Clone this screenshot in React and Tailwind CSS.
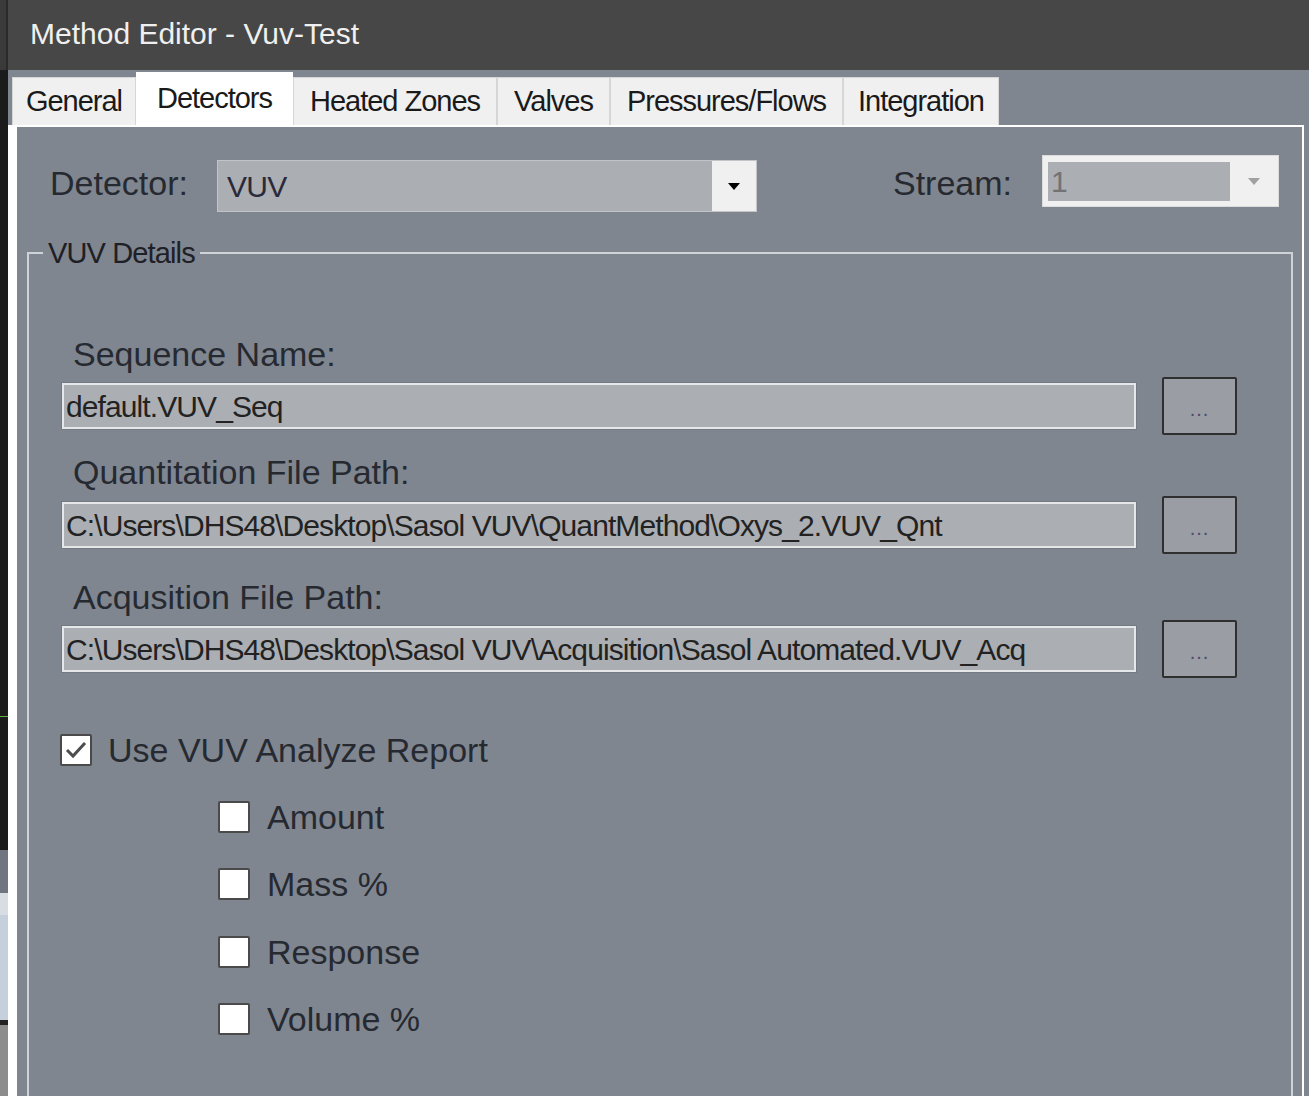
import React from 'react';

const tabs = [
  { label: 'General', w: 'w-[124px]' },
  { label: 'Detectors', w: 'w-[157px]', active: true },
  { label: 'Heated Zones', w: 'w-[204px]' },
  { label: 'Valves', w: 'w-[113px]' },
  { label: 'Pressures/Flows', w: 'w-[233px]' },
  { label: 'Integration', w: 'w-[156px]' },
];

const Caret = ({ color = '#000' }) => (
  <svg width="12" height="7" viewBox="0 0 12 7">
    <polygon points="0,0 12,0 6,7" fill={color} />
  </svg>
);

const CheckBox = ({ checked }) => (
  <div className="w-[32px] h-[32px] shrink-0 bg-white border-2 border-[#4a4a4a] rounded-[2px] flex items-center justify-center">
    {checked && (
      <svg width="24" height="22" viewBox="0 0 24 22">
        <polyline points="3,11 9,17 21,4" fill="none" stroke="#4d4d4d" strokeWidth="3" />
      </svg>
    )}
  </div>
);

const PathRow = ({ value }) => (
  <div className="flex items-center ml-[33px] mr-[54px] gap-[26px]">
    <div className="flex-1 h-[46px] bg-[#abaeb2] border-2 border-[#e6e7e9] shadow-[0_0_0_1px_#737a84] flex items-center pl-[2px] text-[30px] tracking-[-0.03em] text-[#222] whitespace-nowrap overflow-hidden">
      {value}
    </div>
    <button className="w-[75px] h-[58px] bg-[#9a9da3] border-2 border-[#2f2f2f] rounded-[2px] flex justify-center items-end pb-[14px] text-[20px] leading-none tracking-[1px] text-[#4b4b70]">
      ...
    </button>
  </div>
);

const Label = ({ children, className = '' }) => (
  <div className={`ml-[44px] h-[40px] flex items-center text-[34px] text-[#262a30] ${className}`}>{children}</div>
);

const Option = ({ label, className }) => (
  <div className={`flex items-center h-[40px] ml-[189px] gap-[17px] ${className}`}>
    <CheckBox />
    <span className="text-[34px] text-[#262a30]">{label}</span>
  </div>
);

export default function App() {
  return (
    <div className="flex w-[1309px] h-[1096px] overflow-hidden bg-[#7f8690] font-['Liberation_Sans',Arial,sans-serif]">
      {/* ── strip of the window behind ── */}
      <div className="w-[8px] shrink-0 flex flex-col">
        <div className="h-[70px] bg-[#3a3a3a] border-r-2 border-[#2a2a2a]" />
        <div className="h-[646px] bg-[#1b1b1b]" />
        <div className="h-[1px] bg-[#5fb043]" />
        <div className="h-[133px] bg-[#1b1b1b]" />
        <div className="h-[43px] bg-[#6f7680]" />
        <div className="h-[22px] bg-[#d8dde3]" />
        <div className="h-[105px] bg-[#c5d0dc]" />
        <div className="h-[5px] bg-[#222]" />
        <div className="flex-1 bg-[#8c8c8c]" />
      </div>

      <div className="flex-1 flex flex-col min-w-0">
        {/* ── Title bar ── */}
        <div className="h-[70px] shrink-0 bg-[#474747] flex items-center pl-[22px] pb-[4px] text-[30px] text-[#f0f0f0]">
          Method Editor - Vuv-Test
        </div>

        {/* ── Tabs ── */}
        <div className="h-[55px] shrink-0 flex items-end pl-[4px]">
          {tabs.map((t) => (
            <div
              key={t.label}
              className={`${t.w} flex items-center justify-center text-[29px] tracking-[-0.035em] text-[#1a1a1a] ${
                t.active ? 'h-[53px] bg-white' : 'h-[48px] bg-[#f0f0f0] border border-b-0 border-[#d6d6d6]'
              }`}
            >
              {t.label}
            </div>
          ))}
        </div>

        {/* ── Tab page ── */}
        <div className="flex-1 flex flex-col mr-[5px] border-t-2 border-l-[9px] border-r-2 border-white bg-[#7f8690]">
          <div className="flex items-start mt-[28px] h-[57px]">
            <div className="ml-[33px] w-[167px] h-[57px] flex items-center text-[34px] text-[#262a30]">Detector:</div>
            <div className="w-[540px] h-[52px] mt-[5px] bg-[#abaeb2] border border-[#c2c4c7] flex">
              <div className="flex-1 flex items-center pl-[9px] text-[30px] tracking-[-0.025em] text-[#2a2a3a]">VUV</div>
              <div className="w-[44px] bg-[#f0f0f0] flex items-center justify-center">
                <Caret />
              </div>
            </div>
            <div className="ml-[136px] w-[149px] h-[57px] flex items-center text-[34px] text-[#262a30]">Stream:</div>
            <div className="w-[237px] h-[52px] bg-[#f0f0f0] border border-[#dcdcdc] flex pl-[5px] pt-[6px] pb-[5px]">
              <div className="w-[182px] bg-[#abaeb2] flex items-center pl-[3px] text-[30px] text-[#727272]">1</div>
              <div className="flex-1 flex items-center justify-center">
                <Caret color="#a0a0a0" />
              </div>
            </div>
          </div>

          {/* ── VUV Details group ── */}
          <fieldset className="mt-[24px] ml-[10px] mr-[9px] border-2 border-[#cfd2d6] pb-[100px]">
            <legend className="ml-[14px] px-[5px] text-[29px] leading-[34px] tracking-[-0.03em] text-[#1e2026]">VUV Details</legend>

            <Label className="mt-[64px]">Sequence Name:</Label>
            <div className="mt-[3px]">
              <PathRow value="default.VUV_Seq" />
            </div>

            <Label className="mt-[17px]">Quantitation File Path:</Label>
            <div className="mt-[4px]">
              <PathRow value="C:\Users\DHS48\Desktop\Sasol VUV\QuantMethod\Oxys_2.VUV_Qnt" />
            </div>

            <Label className="mt-[23px]">Acqusition File Path:</Label>
            <div className="mt-[3px]">
              <PathRow value="C:\Users\DHS48\Desktop\Sasol VUV\Acquisition\Sasol Automated.VUV_Acq" />
            </div>

            <div className="flex items-center h-[40px] mt-[52px] ml-[31px] gap-[16px]">
              <CheckBox checked />
              <span className="text-[34px] text-[#262a30]">Use VUV Analyze Report</span>
            </div>

            <Option label="Amount" className="mt-[27px]" />
            <Option label="Mass %" className="mt-[27px]" />
            <Option label="Response" className="mt-[28px]" />
            <Option label="Volume %" className="mt-[27px]" />
          </fieldset>
        </div>
      </div>
    </div>
  );
}
